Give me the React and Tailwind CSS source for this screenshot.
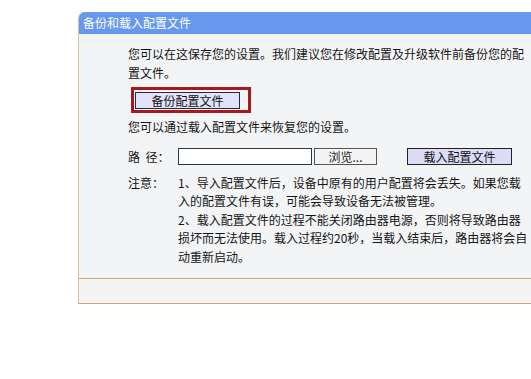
export default function App() {
  const font = { fontFamily: '"Noto Sans CJK SC", "Noto Sans", sans-serif' };
  return (
    <div className="w-[531px] h-[379px] bg-white overflow-hidden" style={font}>
      <div className="ml-[78px] mt-[12px] w-[480px] border-l border-[#d8c0a0] bg-[#f3f4f6] rounded-tl-[6px]">
        <div className="h-[22px] bg-[#6699ee] rounded-tl-[6px] pl-[4px] text-[12px] leading-[22px] text-white">
          备份和载入配置文件
        </div>
        <div className="h-[244px] pl-[49px] pt-[10px] text-[12px] text-[#151515]">
          <p className="leading-[19px] w-[400px]">
            您可以在这保存您的设置。我们建议您在修改配置及升级软件前备份您的配
            <br />
            置文件。
          </p>
          <div className="mt-[5px] ml-[3px] w-[120px] h-[26px] border-[3px] border-[#a3191c] pl-[1px] pt-[2px]">
            <button className="w-[105px] h-[17px] bg-[#e2e2fa] border border-[#2a2a3a] text-[12px] leading-[15px] text-[#111]">
              备份配置文件
            </button>
          </div>
          <p className="mt-[4px] leading-[19px]">您可以通过载入配置文件来恢复您的设置。</p>
          <div className="mt-[12px] flex items-center h-[17px]">
            <span className="w-[50px] leading-[17px]">路&nbsp;&nbsp;径：</span>
            <div className="w-[134px] h-[17px] bg-white border border-[#2b3947]" />
            <button className="ml-[2px] w-[63px] h-[17px] bg-[#f4f4f4] border border-[#555] text-[12px] leading-[15px] text-[#222]">
              浏览...
            </button>
            <button className="ml-[30px] w-[105px] h-[17px] bg-[#dcdcf6] border-[1.5px] border-[#222] text-[12px] leading-[14px] text-[#111]">
              载入配置文件
            </button>
          </div>
          <div className="mt-[9px] flex leading-[18.4px]">
            <span className="w-[50px] shrink-0">注意：</span>
            <div className="w-[350px]">
              1、导入配置文件后，设备中原有的用户配置将会丢失。如果您载
              <br />
              入的配置文件有误，可能会导致设备无法被管理。
              <br />
              2、载入配置文件的过程不能关闭路由器电源，否则将导致路由器
              <br />
              损坏而无法使用。载入过程约20秒，当载入结束后，路由器将会自
              <br />
              动重新启动。
            </div>
          </div>
        </div>
        <div className="h-[26px] border-t border-b border-[#c4a584] bg-[#f5f4f5]" />
      </div>
    </div>
  );
}
